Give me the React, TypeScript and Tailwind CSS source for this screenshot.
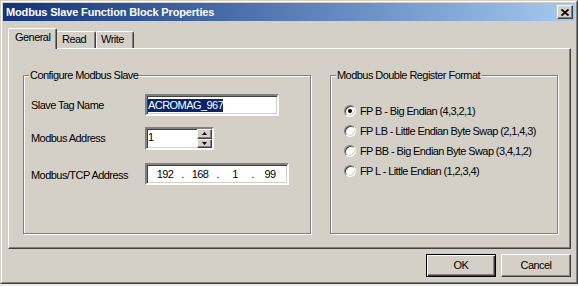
import type { JSX } from "react";

const raised = "border border-t-white border-l-white border-r-[#404040] border-b-[#404040] shadow-[inset_-1px_-1px_0_#808080] bg-[#d4d0c8]";
const sunken = "border-2 border-t-[#808080] border-l-[#808080] border-r-white border-b-white shadow-[inset_1px_1px_0_#404040,inset_-1px_-1px_0_#d4d0c8] bg-white";
const groupBox = "min-w-0 border border-[#808080] shadow-[inset_1px_1px_0_#fff,1px_1px_0_#fff]";

const Radio = ({ checked, label }: { readonly checked?: boolean; readonly label: string }): JSX.Element => (
    <div className="flex items-center h-[20px]">
        <span className="flex shrink-0 items-center justify-center w-[12px] h-[12px] rounded-full border border-t-[#808080] border-l-[#808080] border-r-white border-b-white shadow-[inset_1px_1px_0_#404040,inset_-1px_-1px_0_#d4d0c8] bg-white">
            {checked && <span className="w-[4px] h-[4px] rounded-full bg-black" />}
        </span>
        <span className="ml-[4px] leading-[13px] whitespace-nowrap tracking-[-0.6px]">{label}</span>
    </div>
);

const Arrow = ({ up }: { readonly up?: boolean }): JSX.Element => (
    <svg width="5" height="3" viewBox="0 0 5 3">
        <path d={up ? "M2.5 0 L5 3 L0 3 Z" : "M0 0 L5 0 L2.5 3 Z"} fill="#000" />
    </svg>
);

export default function App(): JSX.Element {
    return (
        <div className="w-[578px] h-[286px] overflow-hidden bg-[#ececec] font-['Liberation_Sans',Arial,sans-serif] text-[11px] tracking-[-0.55px] text-black">
            <div className="h-[284px] border border-t-[#d4d0c8] border-l-[#d4d0c8] border-r-[#404040] border-b-[#404040] bg-[#d4d0c8]">
                <div className="flex flex-col h-full p-px border border-t-white border-l-white border-r-[#808080] border-b-[#808080]">
                    {/* title bar */}
                    <div className="flex items-center justify-between h-[18px] pl-[3px] pr-[2px] bg-linear-to-r from-[#14337a] to-[#a6caf0]">
                        <span className="font-bold text-white tracking-[-0.15px] leading-none">
                            Modbus Slave Function Block Properties
                        </span>
                        <div className={`flex items-center justify-center w-[16px] h-[14px] ${raised}`}>
                            <svg width="8" height="7" viewBox="0 0 8 7">
                                <path d="M0.5 0.5 L7.5 6.5 M7.5 0.5 L0.5 6.5" stroke="#000" strokeWidth="1.8" />
                            </svg>
                        </div>
                    </div>

                    <div className="flex flex-col flex-1 pl-[5px] pr-[4px] pt-[7px] pb-[4px]">
                        {/* tabs */}
                        <div className="flex items-end h-[20px]">
                            <div className="relative z-10 -mb-px h-[21px] w-[49px] pl-[6px] pt-[2px] leading-[13px] rounded-t-[2px] border-l border-t border-r border-l-white border-t-white border-r-[#404040] shadow-[inset_-1px_0_0_#808080] bg-[#d4d0c8]">
                                General
                            </div>
                            <div className="h-[17px] w-[39px] pl-[5px] pt-px leading-[13px] rounded-tr-[2px] border-t border-r border-t-white border-r-[#404040] shadow-[inset_-1px_0_0_#808080]">
                                Read
                            </div>
                            <div className="h-[17px] w-[38px] pl-[4px] pt-px leading-[13px] rounded-t-[2px] border-l border-t border-r border-l-white border-t-white border-r-[#404040] shadow-[inset_-1px_0_0_#808080]">
                                Write
                            </div>
                        </div>

                        {/* tab panel */}
                        <div className="flex h-[201px] pl-[14px] pt-[20px] border border-t-white border-l-white border-r-[#404040] border-b-[#404040] shadow-[inset_-1px_-1px_0_#808080]">
                            <fieldset className={`w-[288px] h-[165px] shrink-0 ${groupBox}`}>
                                <legend className="ml-[5px] px-px leading-[13px] bg-[#d4d0c8]">Configure Modbus Slave</legend>
                                <div className="flex flex-col pl-[7px]">
                                    <div className="flex items-center mt-[12px]">
                                        <span className="w-[114px]">Slave Tag Name</span>
                                        <div className={`w-[134px] h-[22px] pl-px pt-px ${sunken}`}>
                                            <span className="inline-block leading-[13px] bg-[#0a246a] text-white">ACROMAG_967</span>
                                        </div>
                                    </div>
                                    <div className="flex items-center mt-[11px]">
                                        <span className="w-[114px]">Modbus Address</span>
                                        <div className={`flex w-[69px] h-[23px] ${sunken}`}>
                                            <span className="flex-1 pl-px pt-[2px] leading-[13px]">1</span>
                                            <div className="flex flex-col w-[15px]">
                                                <div className={`flex flex-1 items-center justify-center ${raised}`}>
                                                    <Arrow up />
                                                </div>
                                                <div className={`flex flex-1 items-center justify-center ${raised}`}>
                                                    <Arrow />
                                                </div>
                                            </div>
                                        </div>
                                    </div>
                                    <div className="flex items-center mt-[13px]">
                                        <span className="w-[114px] pt-[3px]">Modbus/TCP Address</span>
                                        <div className={`flex items-center w-[144px] h-[22px] pl-[4px] ${sunken}`}>
                                            <span className="w-[28px] text-center">192</span>
                                            <span className="w-[7px] text-center">.</span>
                                            <span className="w-[28px] text-center">168</span>
                                            <span className="w-[7px] text-center">.</span>
                                            <span className="w-[28px] text-center">1</span>
                                            <span className="w-[7px] text-center">.</span>
                                            <span className="w-[28px] text-center">99</span>
                                        </div>
                                    </div>
                                </div>
                            </fieldset>

                            <fieldset className={`w-[228px] h-[165px] ml-[19px] shrink-0 ${groupBox}`}>
                                <legend className="ml-[5px] px-px leading-[13px] bg-[#d4d0c8]">Modbus Double Register Format</legend>
                                <div className="flex flex-col pl-[13px] mt-[19px]">
                                    <Radio checked label="FP B - Big Endian (4,3,2,1)" />
                                    <Radio label="FP LB - Little Endian Byte Swap (2,1,4,3)" />
                                    <Radio label="FP BB - Big Endian Byte Swap (3,4,1,2)" />
                                    <Radio label="FP L - Little Endian (1,2,3,4)" />
                                </div>
                            </fieldset>
                        </div>

                        {/* buttons */}
                        <div className="flex justify-end gap-[5px] mt-[5px]">
                            <button className="w-[70px] h-[23px] border border-black shadow-[inset_1px_1px_0_#fff,inset_-1px_-1px_0_#404040,inset_-2px_-2px_0_#808080] bg-[#d4d0c8]">
                                OK
                            </button>
                            <button className={`w-[70px] h-[23px] ${raised}`}>Cancel</button>
                        </div>
                    </div>
                </div>
            </div>
        </div>
    );
}
